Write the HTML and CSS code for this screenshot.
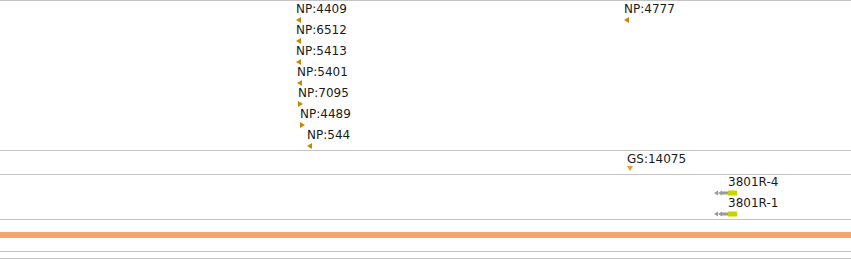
FILE: index.html
```html
<!DOCTYPE html>
<html lang="en">
<head>
    <meta charset="UTF-8">
    <title>Tracks</title>
    <link rel="stylesheet" href="styles.css">
</head>
<body>
    <div class="tracks">
        <div class="track track-np">
            <div class="feat" style="left:296px;top:1px"><span class="lbl">NP:4409</span><i class="tri tri-l"></i></div>
            <div class="feat" style="left:296px;top:22px"><span class="lbl">NP:6512</span><i class="tri tri-l"></i></div>
            <div class="feat" style="left:296px;top:43px"><span class="lbl">NP:5413</span><i class="tri tri-l"></i></div>
            <div class="feat" style="left:297px;top:64px"><span class="lbl">NP:5401</span><i class="tri tri-l"></i></div>
            <div class="feat" style="left:298px;top:85px"><span class="lbl">NP:7095</span><i class="tri tri-r"></i></div>
            <div class="feat" style="left:300px;top:106px"><span class="lbl">NP:4489</span><i class="tri tri-r"></i></div>
            <div class="feat" style="left:307px;top:127px"><span class="lbl">NP:544</span><i class="tri tri-l"></i></div>
            <div class="feat" style="left:624px;top:1px"><span class="lbl">NP:4777</span><i class="tri tri-l"></i></div>
        </div>
        <div class="track track-gs">
            <div class="feat" style="left:627px;top:1px"><span class="lbl">GS:14075</span><i class="tri tri-d"></i></div>
        </div>
        <div class="track track-est">
            <div class="feat" style="left:714px;top:0px">
                <span class="lbl lbl-indent">3801R-4</span>
                <svg class="read" width="23" height="6" viewBox="0 0 23 6">
                    <polygon points="0,3 4,0.5 4,5.5" fill="#9a9a9a"/>
                    <polygon points="4,3 8,0.5 8,5.5" fill="#9a9a9a"/>
                    <rect x="8" y="1.5" width="6" height="3" fill="#9a9a9a"/>
                    <rect x="14" y="0.5" width="9" height="5" fill="#c6d400"/>
                </svg>
            </div>
            <div class="feat" style="left:714px;top:21px">
                <span class="lbl lbl-indent">3801R-1</span>
                <svg class="read" width="23" height="6" viewBox="0 0 23 6">
                    <polygon points="0,3 4,0.5 4,5.5" fill="#9a9a9a"/>
                    <polygon points="4,3 8,0.5 8,5.5" fill="#9a9a9a"/>
                    <rect x="8" y="1.5" width="6" height="3" fill="#9a9a9a"/>
                    <rect x="14" y="0.5" width="9" height="5" fill="#c6d400"/>
                </svg>
            </div>
        </div>
        <div class="track track-cov">
            <div class="cov-bar"></div>
        </div>
        <div class="track track-thin"></div>
        <div class="track track-last"></div>
    </div>
</body>
</html>
```

FILE: styles.css
```css
* { box-sizing: border-box; margin: 0; padding: 0; }
body {
    background: #fff; color: #1a1a1a;
    font-family: "DejaVu Sans", Verdana, sans-serif; font-size: 12px;
}
.tracks { display: flex; flex-direction: column; }
.track { position: relative; border-top: 1px solid #c4c4c4; }
.track-np { height: 150px; }
.track-gs { height: 24px; }
.track-est { height: 45px; }
.track-cov { height: 32px; padding-top: 12px; }
.track-thin { height: 7px; }
.track-last { height: 1px; }
.cov-bar { height: 6px; background: #f4a46e; }

.feat { position: absolute; display: flex; flex-direction: column; align-items: flex-start; }
.lbl { line-height: 14px; white-space: nowrap; }
.lbl-indent { margin-left: 14px; }

.tri { display: block; margin-top: 1px; background: #c68800; }
.tri-l { width: 5px; height: 6px; clip-path: polygon(100% 0, 0 50%, 100% 100%); }
.tri-r { width: 5px; height: 6px; clip-path: polygon(0 0, 100% 50%, 0 100%); }
.tri-d { width: 6px; height: 5px; margin-top: 0; background: #f0a020; clip-path: polygon(0 0, 100% 0, 50% 100%); }

.read { display: block; margin-top: 1px; }
```
